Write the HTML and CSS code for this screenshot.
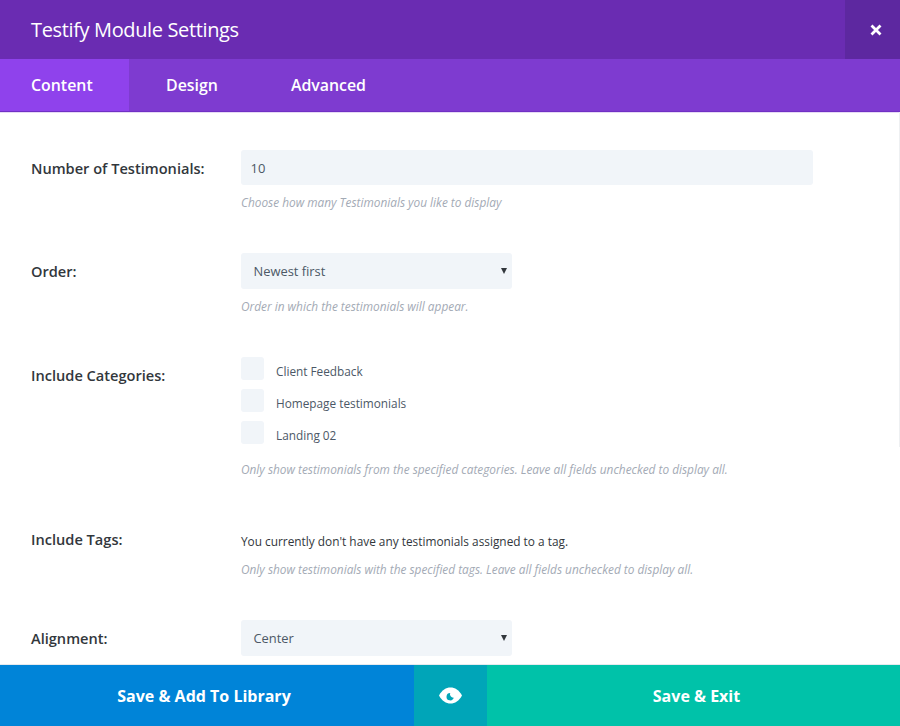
FILE: index.html
```html
<!DOCTYPE html>
<html lang="en">
<head>
<meta charset="utf-8">
<title>Testify Module Settings</title>
<link rel="stylesheet" href="styles.css">
</head>
<body>
<div class="modal">
  <header class="head">
    <h1 class="title">Testify Module Settings</h1>
    <button class="close" aria-label="Close">
      <svg width="12" height="12" viewBox="0 0 12 12"><path d="M1.500 1.500L10.500 10.500M10.500 1.500L1.500 10.500" stroke="#fff" stroke-width="2.800" fill="none"/></svg>
    </button>
  </header>
  <nav class="tabs">
    <a class="tab tab-active">Content</a>
    <a class="tab">Design</a>
    <a class="tab">Advanced</a>
  </nav>
  <main class="body">
    <section class="row row-number">
      <label class="label">Number of Testimonials:</label>
      <div class="field">
        <div class="input">10</div>
        <p class="desc">Choose how many Testimonials you like to display</p>
      </div>
    </section>
    <section class="row row-order">
      <label class="label">Order:</label>
      <div class="field">
        <div class="select"><span>Newest first</span><i class="caret"></i></div>
        <p class="desc">Order in which the testimonials will appear.</p>
      </div>
    </section>
    <section class="row row-cats">
      <label class="label">Include Categories:</label>
      <div class="field">
        <div class="check"><span class="box"></span><span class="check-text">Client Feedback</span></div>
        <div class="check"><span class="box"></span><span class="check-text">Homepage testimonials</span></div>
        <div class="check"><span class="box"></span><span class="check-text">Landing 02</span></div>
        <p class="desc desc-cats">Only show testimonials from the specified categories. Leave all fields unchecked to display all.</p>
      </div>
    </section>
    <section class="row row-tags">
      <label class="label">Include Tags:</label>
      <div class="field">
        <p class="plain">You currently don't have any testimonials assigned to a tag.</p>
        <p class="desc desc-tags">Only show testimonials with the specified tags. Leave all fields unchecked to display all.</p>
      </div>
    </section>
    <section class="row row-align">
      <label class="label">Alignment:</label>
      <div class="field">
        <div class="select"><span>Center</span><i class="caret"></i></div>
      </div>
    </section>
    <div class="scrollbar"></div>
  </main>
  <footer class="foot">
    <button class="btn btn-lib">Save &amp; Add To Library</button>
    <button class="btn btn-eye" aria-label="Preview">
      <svg width="23" height="17" viewBox="0 0 23 17"><path d="M0 8.500C3 3 7 .5 11.500 .5S20 3 23 8.500C20 14 16 16.500 11.500 16.500S3 14 0 8.500Z" fill="#fff"/><path d="M11.200 6A3.700 3.700 0 1 0 14.800 10.600A3.400 3.400 0 0 1 11.200 6Z" fill="#00a5b8"/></svg>
    </button>
    <button class="btn btn-save">Save &amp; Exit</button>
  </footer>
</div>
</body>
</html>
```
FILE: styles.css
```css
* { box-sizing: border-box; }
html, body { margin: 0; padding: 0; }
body { width: 900px; height: 726px; overflow: hidden; font-family: "Open Sans", sans-serif; background: #fff; }
.modal { display: flex; flex-direction: column; width: 900px; height: 726px; }

.head { flex: 0 0 59px; display: flex; align-items: center; justify-content: space-between; background: #6a2cb2; }
.title { margin: 0 0 0 31px; font-size: 20px; font-weight: 400; line-height: 59px; color: #fff; letter-spacing: -.36px; }
.close { width: 55px; height: 59px; border: 0; padding: 0 0 0 7px; background: #5d28a0; display: flex; align-items: center; justify-content: center; }

.tabs { flex: 0 0 53px; display: flex; background: #7e3bd0; border-bottom: 1px solid #7030c4; box-shadow: 0 1px 0 #e6daf5; }
.tab { height: 52px; line-height: 53px; font-size: 15.900px; font-weight: 600; color: #fff; padding: 0 36px 0 37px; }
.tab-active { background: #8f42ec; padding: 0 36px 0 31px; width: 129px; }

.body { flex: 1 1 auto; position: relative; overflow: hidden; min-height: 0; }
.scrollbar { position: absolute; top: 0; right: 0; width: 1px; height: 335px; background: #eef0f2; }

.row { display: flex; padding-left: 31px; }
.label { flex: 0 0 210px; font-size: 14.600px; font-weight: 600; color: #32373c; line-height: 20px; }
.field { flex: 0 0 auto; width: 572px; }

.row-number { margin-top: 38px; }
.row-number .label { padding-top: 8px; }
.row-order { margin-top: 42px; }
.row-order .label { padding-top: 8px; }
.row-cats { margin-top: 42px; }
.row-cats .label { padding-top: 8px; }
.row-tags { margin-top: 52px; }
.row-tags .label { margin-top: -1px; }
.row-align { margin-top: 42px; }
.row-align .label { padding-top: 8px; }

.input { height: 35px; background: #f1f5f9; border-radius: 3px; padding-left: 9.500px; font-size: 13px; font-weight: 400; line-height: 36px; color: #4c5866; }
.select { width: 271px; height: 36px; padding: 0 5px 0 12.500px; background: #f1f5f9; border-radius: 3px; display: flex; align-items: center; justify-content: space-between; font-size: 12.900px; line-height: 36px; color: #4c5866; }
.caret { width: 0; height: 0; border-left: 3px solid transparent; border-right: 3px solid transparent; border-top: 6px solid #32373c; }

.desc { margin: 9px 0 0; font-size: 11.850px; font-style: italic; line-height: 17px; color: #a3aab5; }
.desc-cats { margin-top: 17px; }
.desc-tags { margin-top: 10px; }

.check { display: flex; align-items: center; height: 23px; margin-bottom: 9px; }
.box { width: 23px; height: 23px; border-radius: 3px; background: #f1f5f9; }
.check-text { margin-left: 12px; padding-top: 6px; font-size: 11.800px; line-height: 17px; color: #4c5866; }
.plain { margin: 0; padding-top: 1px; font-size: 11.850px; line-height: 20px; color: #32373c; }

.foot { flex: 0 0 62px; display: flex; border-top: 1px solid #e6eaee; }
.btn { border: 0; padding: 0; height: 61px; font-family: inherit; font-size: 16px; font-weight: 700; color: #fff; display: flex; align-items: center; justify-content: center; }
.btn-lib { width: 414px; padding-right: 6px; background: #0084d8; }
.btn-eye { width: 73px; background: #00a5b8; }
.btn-save { flex: 1; padding-left: 6px; background: #00c2a9; }
```
